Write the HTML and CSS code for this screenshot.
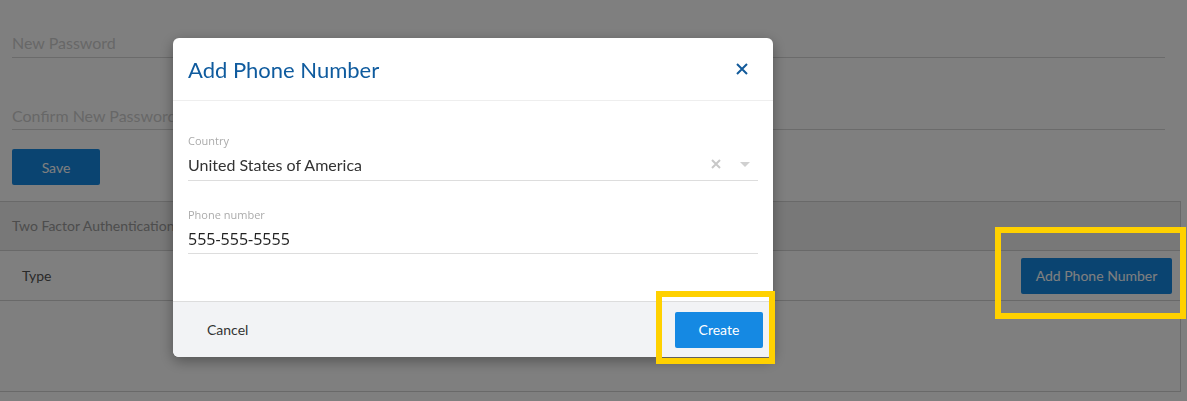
FILE: index.html
```html
<!DOCTYPE html>
<html lang="en">
<head>
    <meta charset="UTF-8">
    <meta name="viewport" content="width=device-width, initial-scale=1.0">
    <title>Account Security</title>
    <link rel="stylesheet" href="styles.css">
</head>
<body>
    <div class="page">
        <form class="password-form">
            <div class="field">
                <input type="password" placeholder="New Password">
            </div>
            <div class="field confirm">
                <input type="password" placeholder="Confirm New Password">
            </div>
            <button type="button" class="btn-primary save-button">Save</button>
        </form>

        <div class="tfa-section">
            <div class="tfa-header">Two Factor Authentication Methods</div>
            <div class="tfa-row">
                <span class="tfa-type">Type</span>
                <button type="button" class="btn-primary add-phone">Add Phone Number</button>
            </div>
        </div>
    </div>

    <!-- Dim layer behind the dialog -->
    <div class="backdrop"></div>

    <!-- Add Phone Number dialog -->
    <div class="modal">
        <div class="modal-header">
            <h2>Add Phone Number</h2>
            <button type="button" class="close-button" aria-label="Close">
                <svg width="14" height="14" viewBox="0 0 14 14">
                    <path d="M2 2 L12 12 M12 2 L2 12" stroke="#135b9b" stroke-width="2" fill="none"/>
                </svg>
            </button>
        </div>
        <div class="modal-body">
            <div class="modal-field">
                <label>Country</label>
                <div class="select">
                    <span class="select-value">United States of America</span>
                    <span class="select-clear">
                        <svg width="10" height="10" viewBox="0 0 10 10">
                            <path d="M1 1 L9 9 M9 1 L1 9" stroke="#c8c8c8" stroke-width="2" fill="none"/>
                        </svg>
                    </span>
                    <span class="select-arrow"></span>
                </div>
            </div>
            <div class="modal-field">
                <label>Phone number</label>
                <input type="text" class="phone-input" value="555-555-5555">
            </div>
        </div>
        <div class="modal-footer">
            <button type="button" class="cancel-button">Cancel</button>
            <button type="button" class="btn-primary create-button">Create</button>
        </div>
    </div>

    <!-- Callout frames -->
    <div class="callout callout-add"></div>
    <div class="callout callout-create"></div>
</body>
</html>
```

FILE: styles.css
```css
body {
    font-family: Lato, "Open Sans", Arial, sans-serif;
    margin: 0;
    padding: 0;
    background-color: #ffffff;
    color: #555555;
}
.page {
    height: 401px;
    overflow: hidden;
}
.password-form {
    padding: 16px 22px 0 12px;
}
.field {
    margin-bottom: 14px;
}
.field input {
    display: block;
    width: 100%;
    box-sizing: border-box;
    border: none;
    border-bottom: 1px solid #d6d6d6;
    padding: 16px 0 5px;
    height: 42px;
    font-family: Lato, Arial, sans-serif;
    font-size: 16px;
    color: #333333;
    outline: none;
    background: transparent;
}
.field.confirm input {
    height: 58px;
    padding-top: 34px;
}
.field input::placeholder {
    color: #cfcfcf;
}
.btn-primary {
    background-color: #1589e3;
    border: none;
    color: #ffffff;
    cursor: pointer;
    border-radius: 2px;
    font-family: Lato, Arial, sans-serif;
    font-size: 14px;
    height: 36px;
}
.save-button {
    width: 88px;
    margin-top: 5px;
}
.tfa-section {
    margin: 16px 6px 0 0;
    border-top: 1px solid #d2d2d2;
    border-right: 1px solid #d2d2d2;
    border-bottom: 1px solid #d2d2d2;
    height: 189px;
}
.tfa-header {
    background-color: #f0f0f0;
    height: 48px;
    line-height: 48px;
    padding-left: 12px;
    font-size: 14px;
    color: #9a9a9a;
    border-bottom: 1px solid #d2d2d2;
}
.tfa-row {
    display: flex;
    justify-content: space-between;
    align-items: center;
    height: 49px;
    padding: 0 8px 0 22px;
    border-bottom: 1px solid #d2d2d2;
}
.tfa-type {
    font-size: 14px;
    color: #555555;
}
.add-phone {
    width: 151px;
}
.backdrop {
    position: fixed;
    inset: 0;
    background-color: rgba(0, 0, 0, 0.5);
}
.modal {
    position: fixed;
    left: 173px;
    top: 38px;
    width: 600px;
    height: 319px;
    background-color: #ffffff;
    border-radius: 6px;
    box-shadow: 0 4px 14px rgba(0, 0, 0, 0.35);
    display: flex;
    flex-direction: column;
    overflow: hidden;
}
.modal-header {
    display: flex;
    justify-content: space-between;
    align-items: center;
    height: 62px;
    padding: 0 24px 0 15px;
    border-bottom: 1px solid #eeeeee;
}
.modal-header h2 {
    margin: 0;
    font-size: 22px;
    font-weight: normal;
    color: #0f5b9e;
}
.close-button {
    background: none;
    border: none;
    padding: 0;
    cursor: pointer;
    display: flex;
}
.modal-body {
    flex: 1;
    padding: 33px 15px 0;
}
.modal-field {
    margin-bottom: 27px;
}
.modal-field label {
    display: block;
    font-family: "Open Sans", "Noto Sans", Arial, sans-serif;
    font-size: 11px;
    color: #ababab;
    line-height: 14px;
}
.select {
    display: flex;
    align-items: center;
    height: 32px;
    border-bottom: 1px solid #dddddd;
}
.select-value {
    flex: 1;
    font-size: 16px;
    color: #333333;
}
.select-clear {
    display: flex;
    margin-right: 19px;
}
.select-arrow {
    width: 0;
    height: 0;
    border-left: 5px solid transparent;
    border-right: 5px solid transparent;
    border-top: 5px solid #d0d0d0;
    margin-right: 8px;
}
.phone-input {
    display: block;
    width: 100%;
    box-sizing: border-box;
    height: 30px;
    margin-top: 2px;
    border: none;
    border-bottom: 1px solid #dddddd;
    padding: 0;
    font-family: "Open Sans", "Noto Sans", Arial, sans-serif;
    font-size: 16px;
    color: #222222;
    outline: none;
}
.modal-footer {
    display: flex;
    justify-content: space-between;
    align-items: center;
    height: 55px;
    padding: 0 10px 0 15px;
    background-color: #f2f3f5;
    border-top: 1px solid #dddddd;
}
.cancel-button {
    background: none;
    border: none;
    cursor: pointer;
    padding: 0 19px;
    font-family: Lato, Arial, sans-serif;
    font-size: 14px;
    color: #333333;
}
.create-button {
    width: 88px;
}
.callout {
    position: fixed;
    border: 6px solid #ffd100;
    box-sizing: border-box;
}
.callout-add {
    left: 995px;
    top: 227px;
    width: 191px;
    height: 92px;
}
.callout-create {
    left: 656px;
    top: 291px;
    width: 119px;
    height: 73px;
}
```
